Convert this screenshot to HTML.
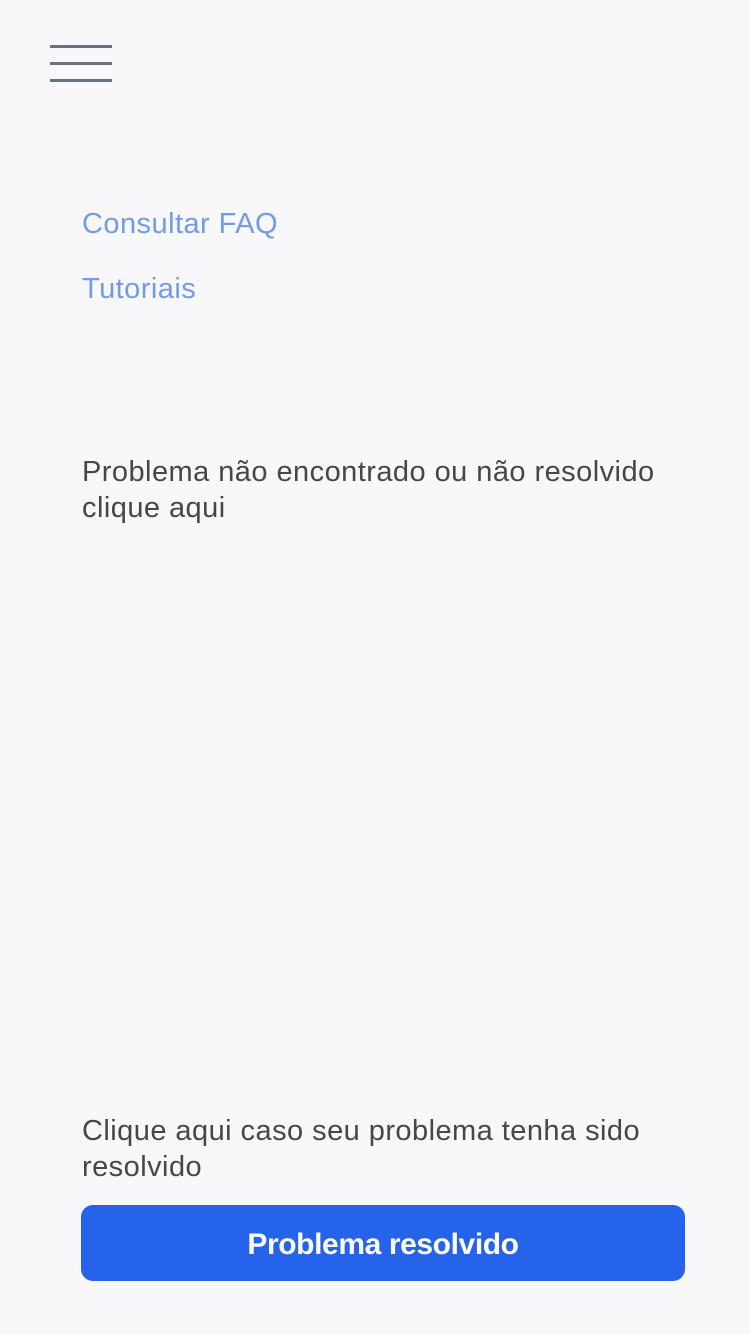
<!DOCTYPE html>
<html><head><meta charset="utf-8"><style>
body{margin:0;width:750px;height:1334px;background:#f8f8fb;font-family:"Liberation Sans",sans-serif;position:relative;overflow:hidden}
.l{position:absolute;left:50px;width:62px;height:3px;background:#6b7080}
.t{position:absolute;left:82px;font-size:29px;letter-spacing:0.45px;line-height:36px;white-space:nowrap}
.a{color:#6f9cec}
.d{color:#4a4547}
.btn{position:absolute;left:81px;top:1205px;width:604px;height:76px;background:#2563eb;border-radius:12px;color:#fff;font-weight:bold;font-size:30px;line-height:80px;text-align:center;letter-spacing:-0.4px}
</style></head><body>
<div class="l" style="top:45px"></div>
<div class="l" style="top:62px"></div>
<div class="l" style="top:79px"></div>
<div class="t a" style="top:206px">Consultar FAQ</div>
<div class="t a" style="top:271px">Tutoriais</div>
<div class="t d" style="top:454px">Problema não encontrado ou não resolvido<br>clique aqui</div>
<div class="t d" style="top:1113px">Clique aqui caso seu problema tenha sido<br>resolvido</div>
<div class="btn">Problema resolvido</div>
</body></html>
